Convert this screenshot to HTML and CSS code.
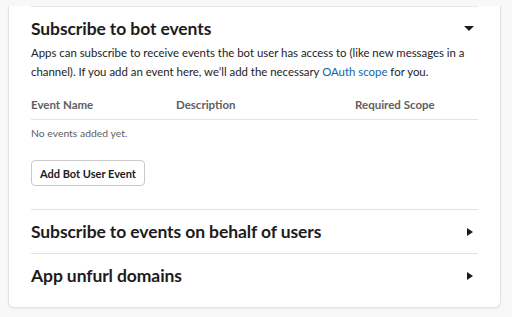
FILE: index.html
```html
<!DOCTYPE html>
<html lang="en">
<head>
    <meta charset="UTF-8">
    <meta name="viewport" content="width=device-width, initial-scale=1.0">
    <title>Event Subscriptions</title>
    <link rel="stylesheet" href="styles.css">
</head>
<body>

<div class="card">
    <div class="card_top_rule"></div>

    <!-- bot events -->
    <section class="section open">
        <div class="section_head">
            <h2 class="section_title">Subscribe to bot events</h2>
            <span class="caret caret_down"></span>
        </div>
        <p class="section_desc">Apps can subscribe to receive events the bot user has access to (like new messages in a channel). If you add an event here, we’ll add the necessary <a href="javascript:;">OAuth scope</a> for you.</p>

        <div class="events_table">
            <div class="events_row events_head">
                <span class="col_name">Event Name</span>
                <span class="col_desc">Description</span>
                <span class="col_scope">Required Scope</span>
            </div>
            <div class="events_empty">No events added yet.</div>
        </div>

        <button class="btn" type="button">Add Bot User Event</button>
    </section>

    <!-- user events -->
    <section class="section">
        <div class="section_head">
            <h2 class="section_title">Subscribe to events on behalf of users</h2>
            <span class="caret caret_right"></span>
        </div>
    </section>

    <!-- unfurl -->
    <section class="section">
        <div class="section_head">
            <h2 class="section_title">App unfurl domains</h2>
            <span class="caret caret_right"></span>
        </div>
    </section>
</div>

</body>
</html>
```

FILE: styles.css
```css
*{
    padding: 0;
    margin: 0;
    box-sizing: border-box;
}
body{
    background: #f8f8f8;
    font-family: Lato, "Liberation Sans", sans-serif;
    color: #1d1c1d;
    padding: 0 11px 9px 8px;
    height: 317px;
    display: flex;
    flex-direction: column;
    justify-content: flex-end;
}
.card{
    background: #fff;
    border: 1px solid #e2e2e2;
    border-top: none;
    border-radius: 0 0 6px 6px;
    box-shadow: 0 1px 2px rgba(0,0,0,.06);
    padding: 0 22px 10px 22px;
}
.card_top_rule{
    height: 1px;
    background: #e8e8e8;
}

/* sections */
.section + .section{
    border-top: 1px solid #e2e2e2;
}
.section_head{
    display: flex;
    align-items: center;
    justify-content: space-between;
    height: 43px;
}
.section.open .section_head{
    height: 36px;
    padding-top: 6px;
}
.section_title{
    font-size: 17.5px;
    font-weight: 700;
    letter-spacing: -0.1px;
}
.section_desc{
    font-size: 11.4px;
    line-height: 19px;
    color: #1d1c1d;
}
.section_desc a{
    color: #1264a3;
    text-decoration: none;
}

/* carets */
.caret{
    width: 0;
    height: 0;
    margin-right: 4px;
}
.caret_down{
    border-left: 5px solid transparent;
    border-right: 5px solid transparent;
    border-top: 5px solid #1d1c1d;
}
.caret_right{
    border-top: 4px solid transparent;
    border-bottom: 4px solid transparent;
    border-left: 6px solid #1d1c1d;
    margin-right: 5px;
}

/* table */
.events_table{
    margin-top: 17px;
}
.events_row{
    display: flex;
    font-size: 11.5px;
    font-weight: 700;
    line-height: 14px;
    color: #616061;
    padding-bottom: 7px;
    border-bottom: 1px solid #e2e2e2;
}
.col_name{
    width: 145px;
}
.col_desc{
    width: 179px;
}
.events_empty{
    font-size: 10.4px;
    color: #616061;
    padding: 6px 0 0;
    line-height: 15px;
}

.btn{
    margin: 19px 0 23px;
    height: 26px;
    padding: 0 8px;
    font-family: inherit;
    font-size: 11px;
    font-weight: 700;
    color: #1d1c1d;
    background: #fff;
    border: 1px solid #c9c9c9;
    border-radius: 4px;
}
```
